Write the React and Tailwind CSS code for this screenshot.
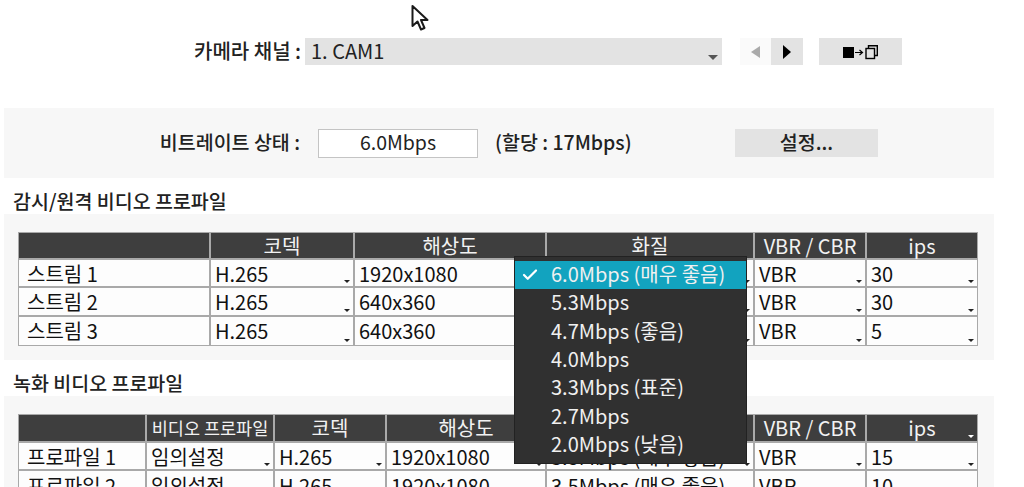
import { Check } from 'lucide-react'

const font = { fontFamily: '"Noto Sans CJK KR", "Noto Sans", sans-serif' }

const Caret = () => (
  <span className="absolute right-[3px] bottom-[3px] w-0 h-0 border-x-[3px] border-x-transparent border-t-[3px] border-t-[#222]" />
)

const HeaderCell = ({ width, children, caret, small }) => (
  <div className={`${width} relative shrink-0 flex items-center justify-center bg-[#3e3e3e] text-[#f2f2f2] border-r-2 border-[#a9a9a9] last:border-r-0 ${small ? 'text-[17.5px]' : ''}`}>
    {children}
    {caret && <span className="absolute right-[3px] bottom-[3px] w-0 h-0 border-x-[3px] border-x-transparent border-t-[3px] border-t-white" />}
  </div>
)

const Cell = ({ width, children, caret = true, label }) => (
  <div className={`${width} relative shrink-0 flex items-center pt-[1px] bg-[#fdfdfd] text-[#111] border-r-2 border-[#a9a9a9] last:border-r-0 ${label ? 'pl-[8px]' : 'pl-[4px]'}`}>
    {children}
    {caret && <Caret />}
  </div>
)

const liveWidths = ['w-[192px]', 'w-[144px]', 'w-[192px]', 'w-[208px]', 'w-[112px]', 'w-[110px]']
const recWidths = ['w-[128px]', 'w-[128px]', 'w-[112px]', 'w-[160px]', 'w-[208px]', 'w-[112px]', 'w-[110px]']

const liveRows = [
  ['스트림 1', 'H.265', '1920x1080', '6.0Mbps (매우 좋음)', 'VBR', '30'],
  ['스트림 2', 'H.265', '640x360', '5.3Mbps', 'VBR', '30'],
  ['스트림 3', 'H.265', '640x360', '4.7Mbps (좋음)', 'VBR', '5'],
]

const recRows = [
  ['프로파일 1', '임의설정', 'H.265', '1920x1080', '3.5Mbps (매우 좋음)', 'VBR', '15'],
  ['프로파일 2', '임의설정', 'H.265', '1920x1080', '3.5Mbps (매우 좋음)', 'VBR', '10'],
]

const menuItems = [
  '6.0Mbps (매우 좋음)',
  '5.3Mbps',
  '4.7Mbps (좋음)',
  '4.0Mbps',
  '3.3Mbps (표준)',
  '2.7Mbps',
  '2.0Mbps (낮음)',
]

const ProfileTable = ({ widths, headers, rows, headCaret, headHeight, smallHead }) => (
  <div className="w-[960px] border border-[#a9a9a9]">
    <div className={`flex ${headHeight} border-b-2 border-[#a9a9a9]`}>
      {headers.map((h, i) => (
        <HeaderCell key={i} width={widths[i]} small={i === smallHead} caret={headCaret && i === headers.length - 1}>
          {h}
        </HeaderCell>
      ))}
    </div>
    {rows.map((row, r) => (
      <div key={r} className="flex h-[28.3px] border-b-2 border-[#a9a9a9] last:border-b-0">
        {row.map((v, i) => (
          <Cell key={i} width={widths[i]} caret={i !== 0} label={i === 0}>
            {v}
          </Cell>
        ))}
      </div>
    ))}
  </div>
)

export default function App() {
  return (
    <div className="relative w-[1024px] h-[487px] overflow-hidden bg-white text-[20px] leading-none text-[#222]" style={font}>
      {/* Camera channel */}
      <div className="flex items-center h-[27px] mt-[38px]">
        <div className="w-[301px] pb-[2px] text-right font-medium">카메라 채널 :</div>
        <div className="relative ml-[4px] w-[417px] h-full flex items-center pl-[6px] pb-[2px] bg-[#e3e3e3]">
          1. CAM1
          <span className="absolute right-[4px] bottom-[5px] w-0 h-0 border-x-[5px] border-x-transparent border-t-[5px] border-t-[#555]" />
        </div>
        <div className="flex h-full ml-[18px]">
          <button className="w-[31px] flex items-center justify-center bg-[#fafafa]">
            <span className="w-0 h-0 border-y-[6px] border-y-transparent border-r-[9px] border-r-[#aaa]" />
          </button>
          <button className="w-[32px] flex items-center justify-center bg-[#e3e3e3]">
            <span className="w-0 h-0 border-y-[7px] border-y-transparent border-l-[8px] border-l-black" />
          </button>
        </div>
        <button className="ml-[16px] w-[83px] h-full flex items-center justify-center bg-[#e3e3e3]">
          <svg width="38" height="16" viewBox="0 0 38 16">
            <rect x="1" y="3" width="11" height="11" fill="#000" />
            <path d="M13 8.500h7M17.500 6l3 2.500-3 2.500" stroke="#000" strokeWidth="1.200" fill="none" />
            <rect x="24" y="4.500" width="8.500" height="10" stroke="#000" strokeWidth="1.400" fill="#e3e3e3" />
            <path d="M26.500 4.500V1.700h8.800v9.800h-2.800" stroke="#000" strokeWidth="1.400" fill="none" />
          </svg>
        </button>
      </div>

      {/* Bitrate status */}
      <div className="flex items-center h-[70px] mt-[43px] mx-[4px] w-[990px] bg-[#f7f7f7] text-[19.5px]">
        <div className="w-[296px] pb-[2px] text-right font-medium">비트레이트 상태 :</div>
        <div className="ml-[18px] w-[160px] h-[29px] flex items-center justify-center pb-[2px] bg-white border border-[#c4c4c4]">6.0Mbps</div>
        <div className="ml-[17px] w-[240px] pb-[2px] font-medium">(할당 : 17Mbps)</div>
        <button className="w-[143px] h-[28px] flex items-center justify-center pb-[2px] bg-[#e3e3e3] font-medium text-[#222]">설정...</button>
      </div>

      {/* Live/remote profile */}
      <div className="h-[36px] pl-[13px] flex items-center text-[19.5px] font-medium pt-[9px]">감시/원격 비디오 프로파일</div>
      <div className="mx-[4px] w-[990px] h-[146px] pt-[18px] pl-[14px] bg-[#f7f7f7]">
        <ProfileTable
          widths={liveWidths}
          headHeight="h-[27px]"
          headers={['', '코덱', '해상도', '화질', 'VBR / CBR', 'ips']}
          rows={liveRows}
        />
      </div>

      {/* Record profile */}
      <div className="h-[36px] pl-[13px] flex items-center text-[19.5px] font-medium pt-[9px]">녹화 비디오 프로파일</div>
      <div className="mx-[4px] w-[990px] h-[91px] pt-[18px] pl-[14px] bg-[#f7f7f7]">
        <ProfileTable
          widths={recWidths}
          headHeight="h-[28px]"
          smallHead={1}
          headers={['', '비디오 프로파일', '코덱', '해상도', '화질', 'VBR / CBR', 'ips']}
          rows={recRows}
          headCaret
        />
      </div>

      {/* Quality dropdown menu */}
      <div className="absolute left-[514px] top-[256px] w-[233px] h-[208px] pt-[4px] bg-[#303030] border border-[#222] text-[#f0f0f0]">
        {menuItems.map((item, i) => (
          <div key={item} className={`relative flex items-center pl-[36px] pb-[1px] ${i === 0 ? 'h-[27.5px] bg-[#12a3bf]' : 'h-[28.4px]'}`}>
            {i === 0 && <Check size={18} strokeWidth={3} className="absolute left-[6px] top-[5px] text-white" />}
            {item}
          </div>
        ))}
      </div>

      {/* Mouse pointer */}
      <svg className="absolute left-[410px] top-[4px]" width="20" height="29" viewBox="0 0 20 29">
        <path d="M2.500 2v20l5-4.500 3.500 8 3.500-1.500-3.500-8h6.500z" fill="#fff" stroke="#1a1a1a" strokeWidth="2" strokeLinejoin="round" />
      </svg>
    </div>
  )
}
